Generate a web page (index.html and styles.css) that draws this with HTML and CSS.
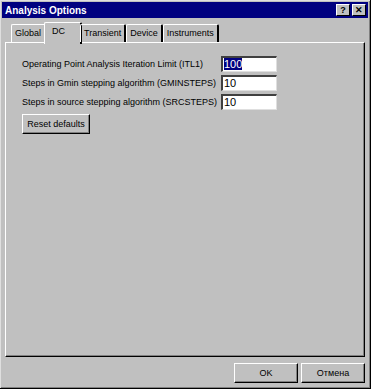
FILE: index.html
```html
<!DOCTYPE html>
<html>
<head>
  <link rel="stylesheet" href="styles.css">
</head>
<body>
  <div class="window">
    <div class="titlebar">
      <span class="title">Analysis Options</span>
      <div class="title-buttons">
        <span class="title-btn">?</span>
        <span class="title-btn">&#x2715;</span>
      </div>
    </div>

    <div class="tabs">
      <span class="tab">Global</span>
      <span class="tab active">DC</span>
      <span class="tab">Transient</span>
      <span class="tab">Device</span>
      <span class="tab">Instruments</span>
    </div>

    <div class="panel">
      <div class="fields">
        <label>Operating Point Analysis Iteration Limit (ITL1)</label>
        <div class="input"><span class="selected">100</span></div>
        <label>Steps in Gmin stepping algorithm (GMINSTEPS)</label>
        <div class="input">10</div>
        <label>Steps in source stepping algorithm (SRCSTEPS)</label>
        <div class="input">10</div>
      </div>
      <button class="btn reset">Reset defaults</button>
    </div>

    <div class="footer">
      <button class="btn">OK</button>
      <button class="btn">Отмена</button>
    </div>
  </div>
</body>
</html>
```

FILE: styles.css
```css
body {
  margin: 0;
  font-family: "Liberation Sans", Arial, sans-serif;
  font-size: 9px;
  color: #000;
  background: #c0c0c0;
}

.window {
  width: 371px;
  height: 389px;
  box-sizing: border-box;
  padding: 2px;
  background: #c0c0c0;
  border-right: 1px solid #000;
  border-bottom: 1px solid #000;
  box-shadow: inset 1px 1px 0 #dfdfdf, inset -1px -1px 0 #808080;
  display: flex;
  flex-direction: column;
}

.titlebar {
  height: 16px;
  background: #000080;
  color: #fff;
  display: flex;
  align-items: center;
  justify-content: space-between;
  padding: 0 2px 0 3px;
}

.title {
  font-weight: bold;
  font-size: 10px;
}

.title-buttons {
  display: flex;
  gap: 2px;
}

.title-btn {
  width: 14px;
  height: 12px;
  box-sizing: border-box;
  background: #c0c0c0;
  color: #000;
  font-weight: bold;
  font-size: 9px;
  line-height: 11px;
  text-align: center;
  border-top: 1px solid #fff;
  border-left: 1px solid #fff;
  border-right: 1px solid #000;
  border-bottom: 1px solid #000;
}

.tabs {
  display: flex;
  align-items: flex-end;
  margin: 4px 0 0 9px;
  height: 20px;
  position: relative;
  z-index: 1;
  white-space: nowrap;
}

.tab {
  height: 18px;
  box-sizing: border-box;
  padding: 3px 3px 0;
  border-top: 1px solid #fff;
  border-left: 1px solid #fff;
  border-right: 2px solid #000;
  border-radius: 2px 2px 0 0;
}

.tab.active {
  width: 38px;
  height: 22px;
  margin: 0 -2px -2px;
  padding: 3px 0 0 7px;
  background: #c0c0c0;
}

.panel {
  height: 315px;
  box-sizing: border-box;
  margin: 0 3px 0 3px;
  padding: 13px 16px;
  border-top: 1px solid #fff;
  border-left: 1px solid #fff;
  border-right: 1px solid #000;
  border-bottom: 1px solid #000;
  box-shadow: inset -1px -1px 0 #808080;
}

.fields {
  display: grid;
  grid-template-columns: 199px 56px;
  row-gap: 3px;
  align-items: center;
  white-space: nowrap;
}

.input {
  height: 16px;
  box-sizing: border-box;
  background: #fff;
  border-top: 2px solid #404040;
  border-left: 2px solid #404040;
  border-right: 1px solid #dfdfdf;
  border-bottom: 1px solid #dfdfdf;
  padding-left: 1px;
  line-height: 12px;
  font-size: 11px;
}

.selected {
  background: #000080;
  color: #fff;
}

.btn {
  font-family: inherit;
  font-size: 9px;
  height: 20px;
  background: #c0c0c0;
  border: 1px solid;
  border-color: #fff #000 #000 #fff;
  box-shadow: inset -1px -1px 0 #808080;
  padding: 0;
}

.reset {
  width: 68px;
  margin-top: 4px;
}

.footer {
  display: flex;
  justify-content: flex-end;
  gap: 3px;
  padding: 6px 3px 0 0;
}

.footer .btn {
  width: 64px;
}
```
